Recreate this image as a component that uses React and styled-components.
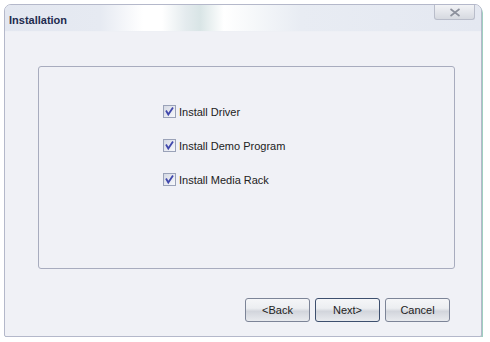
import styled, { createGlobalStyle } from "styled-components";

const GlobalStyle = createGlobalStyle`
  html, body {
    margin: 0;
    padding: 0;
    background: #ffffff;
    font-family: "Liberation Sans", Arial, sans-serif;
  }
`;

const Window = styled.div`
  margin: 4px 0 0 4px;
  width: 478px;
  height: 333px;
  box-sizing: border-box;
  border: 1px solid #b4b8ca;
  border-radius: 7px 7px 2px 2px;
  background: #f0f1f6;
  box-shadow: 1px 2px 0 #9fcfc0;
  display: flex;
  flex-direction: column;
  overflow: hidden;
`;

const TitleBar = styled.div`
  height: 26px;
  display: flex;
  align-items: center;
  justify-content: space-between;
  padding: 0 6px 0 4px;
  background: linear-gradient(
    to right,
    #e3e7f0 0%,
    #e6eaf2 20%,
    #ffffff 29%,
    #ffffff 33%,
    #e4ebee 38%,
    #d9e5e6 41%,
    #ffffff 46%,
    #f6f8fa 52%,
    #e8ecf3 62%,
    #e4e8f1 100%
  );
  border-bottom: 1px solid #eef0f5;
`;

const Title = styled.span`
  font-size: 11px;
  font-weight: bold;
  color: #1e2b4e;
  margin-top: 3px;
`;

const CloseButton = styled.div`
  align-self: flex-start;
  width: 41px;
  height: 15px;
  box-sizing: border-box;
  border: 1px solid #b9bdca;
  border-top: none;
  border-radius: 0 0 3px 3px;
  background: linear-gradient(#f2f3f6, #d6d9e0);
  display: flex;
  align-items: center;
  justify-content: center;
`;

const Body = styled.div`
  flex: 1;
  display: flex;
  flex-direction: column;
  padding: 34px 0 0 33px;
`;

const Panel = styled.div`
  width: 417px;
  height: 203px;
  box-sizing: border-box;
  border: 1px solid #a8acbe;
  border-radius: 3px;
  padding: 38px 0 0 124px;
  display: flex;
  flex-direction: column;
  gap: 21px;
`;

const Option = styled.label`
  display: flex;
  align-items: center;
  gap: 3px;
  height: 13px;
  font-size: 11px;
  color: #222222;
`;

const Box = styled.span`
  width: 13px;
  height: 13px;
  box-sizing: border-box;
  border: 1px solid #9aa2b8;
  background: linear-gradient(135deg, #d5d9e4, #f7f8fb);
  display: flex;
  align-items: center;
  justify-content: center;
`;

const ButtonRow = styled.div`
  display: flex;
  justify-content: flex-end;
  gap: 5px;
  padding: 29px 31px 0 0;
`;

const Button = styled.button`
  width: 65px;
  height: 24px;
  box-sizing: border-box;
  border: 1px solid ${(p) => (p.$default ? "#3d4f6e" : "#7c8497")};
  border-radius: 3px;
  background: linear-gradient(#f5f6f8 0%, #eceef1 42%, #d2d5dc 56%, #e8eaee 100%);
  font-family: "Liberation Sans", Arial, sans-serif;
  font-size: 11px;
  color: #222222;
  padding: 0;
`;

const Check = () => (
  <svg width="11" height="11" viewBox="0 0 11 11">
    <path d="M2 4.5 L4.3 8.5 L9 1.5" fill="none" stroke="#4048ac" strokeWidth="1.8" />
  </svg>
);

const options = ["Install Driver", "Install Demo Program", "Install Media Rack"];

export default function App() {
  return (
    <>
      <GlobalStyle />
      <Window>
        <TitleBar>
          <Title>Installation</Title>
          <CloseButton>
            <svg width="12" height="9" viewBox="0 0 12 9">
              <path d="M1.5 1 L10.5 8 M10.5 1 L1.5 8" stroke="#8c909c" strokeWidth="1.6" />
            </svg>
          </CloseButton>
        </TitleBar>
        <Body>
          <Panel>
            {options.map((o) => (
              <Option key={o}>
                <Box>
                  <Check />
                </Box>
                {o}
              </Option>
            ))}
          </Panel>
          <ButtonRow>
            <Button>&lt;Back</Button>
            <Button $default>Next&gt;</Button>
            <Button>Cancel</Button>
          </ButtonRow>
        </Body>
      </Window>
    </>
  );
}
